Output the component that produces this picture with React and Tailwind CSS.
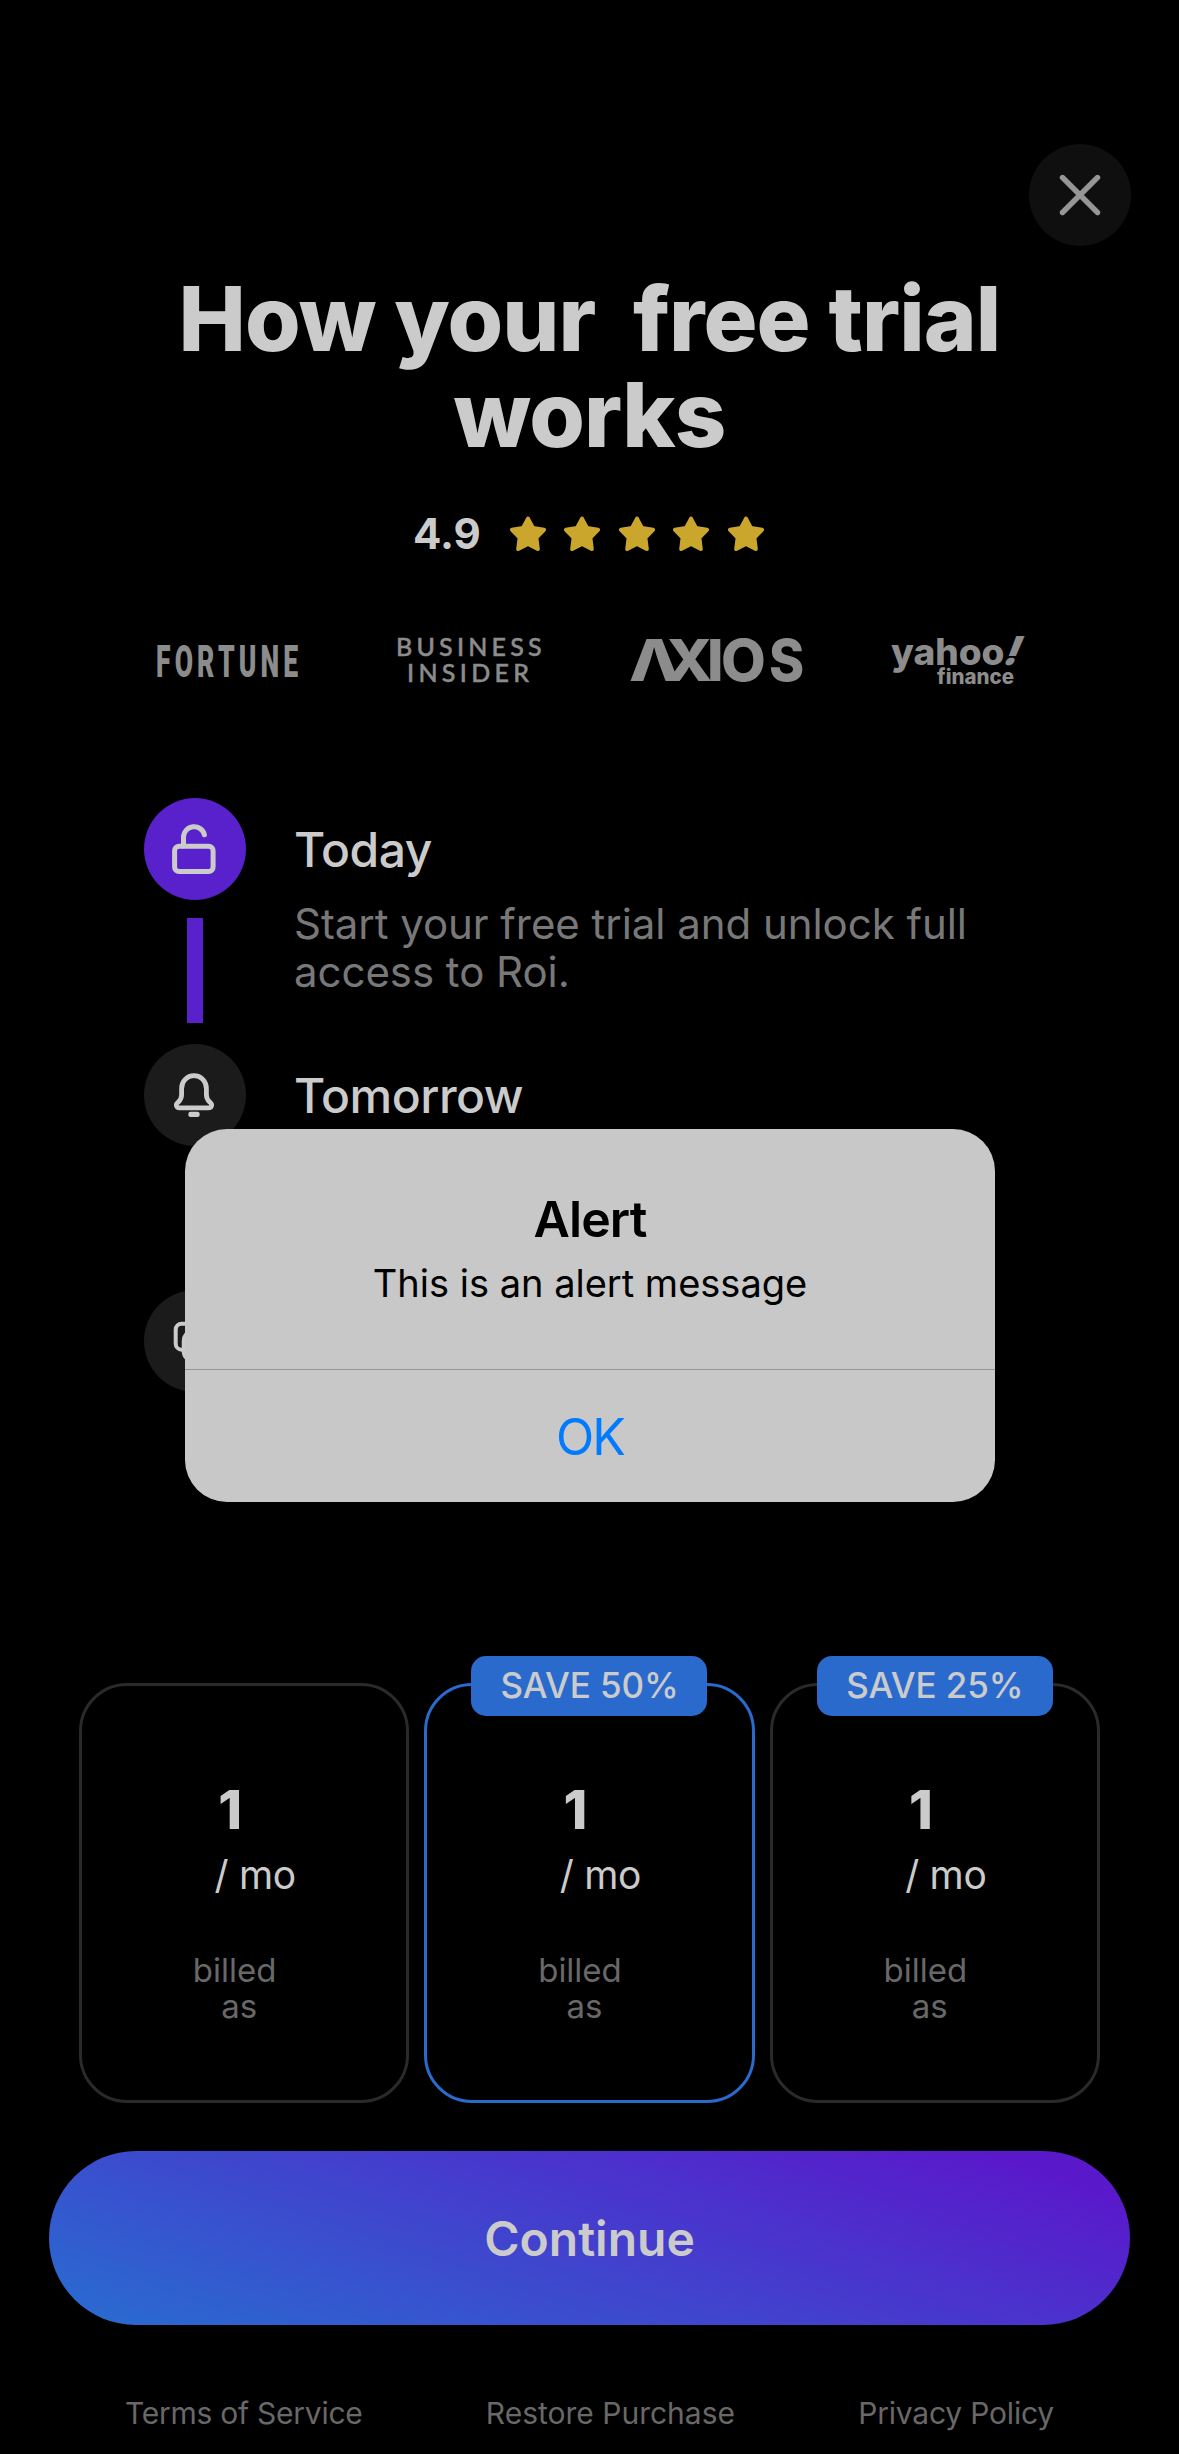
import React from "react";

const STEPS = [
  {
    title: "Today",
    text: "Start your free trial and unlock full access to Roi.",
    circle: "bg-[#5821cb]",
    icon: LockIcon,
    line: true,
  },
  { title: "Tomorrow", circle: "bg-[#1b1b1b]", icon: BellIcon },
  { circle: "bg-[#1b1b1b]", icon: ChatIcon },
];

const PLANS = [
  { border: "border-[#2a2a2a]" },
  { border: "border-[#2a6acd]", badge: "SAVE 50%" },
  { border: "border-[#2a2a2a]", badge: "SAVE 25%" },
];

function LockIcon() {
  return (
    <svg viewBox="0 0 102 102" className="size-full" fill="none" stroke="#cbcbcb" strokeWidth="5" strokeLinecap="round">
      <rect x="30.6" y="48.2" width="38.5" height="25.3" rx="4.5" />
      <path d="M39.5 48V39a10.6 10.6 0 0 1 20.9-2.2" />
    </svg>
  );
}

function BellIcon() {
  return (
    <svg viewBox="0 0 102 102" className="size-full" fill="none" stroke="#cbcbcb" strokeWidth="4.8" strokeLinejoin="round">
      <path d="M50 31.700c-7 0-12.400 5.500-12.400 13v6c0 3-1 5-3 7l-1.200 1.200c-2 2-.8 5 2 5h29.200c2.800 0 4-3 2-5l-1.200-1.200c-2-2-3-4-3-7v-6c0-7.500-5.400-13-12.400-13z" />
      <rect x="44.300" y="67.700" width="11.400" height="5.300" rx="2.200" fill="#cbcbcb" stroke="none" />
    </svg>
  );
}

function ChatIcon() {
  return (
    <svg viewBox="0 0 102 102" className="size-full" fill="none" stroke="#cbcbcb" strokeWidth="4">
      <rect x="31.700" y="33.700" width="30" height="26" rx="6" />
      <path d="M48 42c-5 0-8 4-8 9v11c0 3 1.500 5 4 7" strokeWidth="4.500" />
    </svg>
  );
}

function Star() {
  return (
    <svg viewBox="0 0 36 36" className="size-9" fill="#cba62c" stroke="#cba62c" strokeWidth="4" strokeLinejoin="round">
      <path d="M18 2.600 23 11.900 34 13.800 26.400 21.700 27.800 33 18 28 8.200 33 9.600 21.700 2 13.800 13 11.900z" />
    </svg>
  );
}

function Press() {
  return (
    <div className="mt-[72px] flex h-[60px] pl-[157px]">
      <svg width="141" height="60" className="overflow-visible" fill="#8c8c8c" fontFamily="Roboto" fontWeight="900">
        <text transform="translate(-1 47) scale(.59 1)" fontSize="45" letterSpacing="7">FORTUNE</text>
      </svg>
      <svg width="146" height="60" className="ml-[100px] overflow-visible" fill="#8c8c8c" fontFamily="Lato" fontSize="25" fontWeight="500" stroke="#8c8c8c" strokeWidth=".5">
        <text x="-2" y="26.300" letterSpacing="4.200">BUSINESS</text>
        <text x="9" y="52" letterSpacing="4.300">INSIDER</text>
      </svg>
      <svg width="177" height="60" className="ml-[86px] overflow-visible" fill="#8c8c8c" fontFamily="Inter" fontWeight="800" fontSize="58">
        <text transform="translate(-1 50.600) scale(1.14 1)">Λ</text>
        <text transform="translate(36 50.600) scale(1.05 1)">X</text>
        <text x="77" y="50.600">I</text>
        <text x="91" y="50.600">O</text>
        <text transform="translate(139 50.600) scale(.92 1)">S</text>
      </svg>
      <svg width="134" height="60" className="ml-[84px] overflow-visible" fill="#8c8c8c" fontFamily="Inter" fontWeight="800">
        <text x="0" y="34.500" fontSize="37">yahoo</text>
        <text transform="translate(110 34.500) skewX(-22)" fontSize="40" fontWeight="900">!</text>
        <text x="46" y="53.500" fontSize="20.500">finance</text>
      </svg>
    </div>
  );
}

function Step({ title, text, circle, icon: Icon, line }) {
  return (
    <div className="flex gap-12">
      <div className="flex w-[102px] shrink-0 flex-col items-center">
        <div className={`size-[102px] rounded-full ${circle}`}>
          <Icon />
        </div>
        {line && <div className="mt-[18px] h-[105px] w-[15.500px] bg-[#5821cb]" />}
      </div>
      <div className="w-[700px]">
        {title && (
          <div className="flex h-[102px] items-center pt-0.5 text-[48px] font-medium tracking-[-0.500px] text-[#cbcbcb]">{title}</div>
        )}
        {text && <p className="text-[42px] leading-[48px] tracking-[-0.050px] text-[#787878]">{text}</p>}
      </div>
    </div>
  );
}

function Plan({ border, badge }) {
  return (
    <div className={`relative flex h-[420px] flex-col items-center rounded-[48px] border-[3px] pt-[91px] text-[#cbcbcb] ${border}`}>
      {badge && (
        <div className="absolute -top-[30px] flex h-[60px] w-[236px] items-center justify-center rounded-[15px] bg-[#2a6acd] pb-0.5 text-[35px] font-medium tracking-[-0.100px]">
          {badge}
        </div>
      )}
      <div className="pr-[28px] text-[54px] leading-[66px] font-extrabold">1</div>
      <div className="mt-2 pl-[22px] text-[39px] leading-[48px] tracking-[-0.300px]">/ mo</div>
      <div className="mt-[53px] flex flex-col items-center text-[33px] leading-9 text-[#686868]">
        <span className="pr-[19px]">billed</span>
        <span className="pr-[10px]">as</span>
      </div>
    </div>
  );
}

function Alert() {
  return (
    <div className="absolute inset-0 flex items-start pt-[1129px] pl-[185px]">
      <div className="flex h-[373px] w-[810px] flex-col rounded-[42px] bg-[#c8c8c8] text-center text-black">
        <div className="h-60 pt-[60px]">
          <div className="text-[50px] leading-[60px] font-semibold tracking-[-0.900px]">Alert</div>
          <div className="mt-[10px] text-[38px] leading-[48px]">This is an alert message</div>
        </div>
        <button className="flex-1 border-t border-[#959595] pt-0.5 text-[50px] tracking-[-2px] text-[#007aff]">OK</button>
      </div>
    </div>
  );
}

export default function App() {
  return (
    <div className="relative h-[2454px] w-[1179px] overflow-hidden bg-black font-['Inter',sans-serif]">
      <div className="flex justify-end pt-36 pr-12">
        <button className="flex size-[102px] items-center justify-center rounded-full bg-[#0f0f0f]">
          <svg width="42" height="42" viewBox="0 0 42 42" fill="none" stroke="#969696" strokeWidth="5.400" strokeLinecap="round">
            <path d="M3.500 3.500 38.500 38.500M38.500 3.500 3.500 38.500" />
          </svg>
        </button>
      </div>

      <h1 className="mt-[25px] text-center text-[90px] leading-[96px] font-extrabold tracking-[-0.900px] whitespace-pre text-[#cbcbcb]">
        {"How your  free trial\nworks"}
      </h1>

      <div className="mt-[47px] flex h-12 items-center pl-[413px]">
        <span className="text-[42px] leading-[48px] font-bold text-[#cbcbcb]">4.9</span>
        <div className="ml-[29px] flex gap-[18.500px]">
          {[0, 1, 2, 3, 4].map((i) => (
            <Star key={i} />
          ))}
        </div>
      </div>

      <Press />

      <div className="mt-[108px] grid auto-rows-[246px] pl-36">
        {STEPS.map((step, i) => (
          <Step key={i} {...step} />
        ))}
      </div>

      <div className="mt-[147px] grid grid-cols-3 gap-[15px] px-[79px]">
        {PLANS.map((plan, i) => (
          <Plan key={i} {...plan} />
        ))}
      </div>

      <button className="mt-12 ml-[49px] block h-[174px] w-[1081px] rounded-full bg-[linear-gradient(19deg,#286dd0_0%,#5a18cb_92%)] pt-0.5 text-[48px] font-semibold text-[#cbcbcb]">
        Continue
      </button>

      <div className="mt-[70px] flex justify-between px-[125px] text-[30px] leading-9 text-[#686868]">
        <span className="tracking-[-0.250px]">Terms of Service</span>
        <span>Restore Purchase</span>
        <span className="tracking-[-0.200px]">Privacy Policy</span>
      </div>

      <Alert />
    </div>
  );
}
